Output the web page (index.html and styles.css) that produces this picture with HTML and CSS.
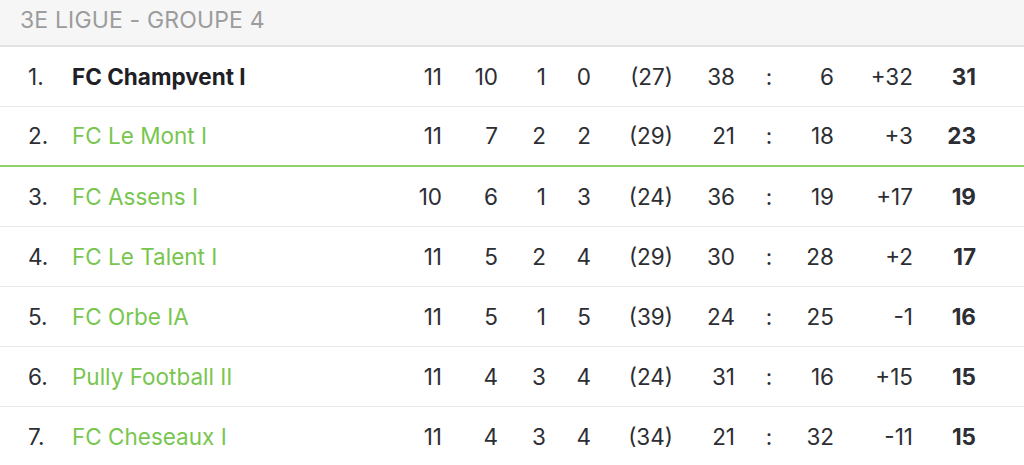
FILE: index.html
```html
<!DOCTYPE html>
<html lang="fr">
<head>
<meta charset="utf-8">
<title>3e ligue - Groupe 4</title>
<link rel="stylesheet" href="styles.css">
</head>
<body>
<div class="league">
  <div class="league-head">3E LIGUE - GROUPE 4</div>
  <div class="table">
    <div class="row">
      <span class="rank">1.</span><span class="team team-self">FC Champvent I</span>
      <span class="num">11</span><span class="num">10</span><span class="num">1</span><span class="num">0</span><span class="num">(27)</span><span class="num">38</span><span class="colon">:</span><span class="num">6</span><span class="num">+32</span><span class="num pts">31</span>
    </div>
    <div class="row row-promo">
      <span class="rank">2.</span><span class="team">FC Le Mont I</span>
      <span class="num">11</span><span class="num">7</span><span class="num">2</span><span class="num">2</span><span class="num">(29)</span><span class="num">21</span><span class="colon">:</span><span class="num">18</span><span class="num">+3</span><span class="num pts">23</span>
    </div>
    <div class="row">
      <span class="rank">3.</span><span class="team">FC Assens I</span>
      <span class="num">10</span><span class="num">6</span><span class="num">1</span><span class="num">3</span><span class="num">(24)</span><span class="num">36</span><span class="colon">:</span><span class="num">19</span><span class="num">+17</span><span class="num pts">19</span>
    </div>
    <div class="row">
      <span class="rank">4.</span><span class="team">FC Le Talent I</span>
      <span class="num">11</span><span class="num">5</span><span class="num">2</span><span class="num">4</span><span class="num">(29)</span><span class="num">30</span><span class="colon">:</span><span class="num">28</span><span class="num">+2</span><span class="num pts">17</span>
    </div>
    <div class="row">
      <span class="rank">5.</span><span class="team">FC Orbe IA</span>
      <span class="num">11</span><span class="num">5</span><span class="num">1</span><span class="num">5</span><span class="num">(39)</span><span class="num">24</span><span class="colon">:</span><span class="num">25</span><span class="num">-1</span><span class="num pts">16</span>
    </div>
    <div class="row">
      <span class="rank">6.</span><span class="team">Pully Football II</span>
      <span class="num">11</span><span class="num">4</span><span class="num">3</span><span class="num">4</span><span class="num">(24)</span><span class="num">31</span><span class="colon">:</span><span class="num">16</span><span class="num">+15</span><span class="num pts">15</span>
    </div>
    <div class="row">
      <span class="rank">7.</span><span class="team">FC Cheseaux I</span>
      <span class="num">11</span><span class="num">4</span><span class="num">3</span><span class="num">4</span><span class="num">(34)</span><span class="num">21</span><span class="colon">:</span><span class="num">32</span><span class="num">-11</span><span class="num pts">15</span>
    </div>
  </div>
</div>
</body>
</html>
```

FILE: styles.css
```css
* { box-sizing: border-box; }
html, body { margin: 0; padding: 0; background: #fff; }
body {
  font-family: Inter, "Liberation Sans", Arial, sans-serif;
  color: #2c2e33;
  overflow: hidden;
}
.league-head {
  height: 47px;
  background: #f6f6f6;
  border-bottom: 2px solid #e2e2e2;
  padding: 6px 0 0 20px;
  font-size: 23px;
  line-height: 28px;
  letter-spacing: 0.15px;
  color: #9c9c9c;
}
.row {
  display: grid;
  grid-template-columns: 44px 1fr 52px 56px 48px 45px 82px 62px 68px 31px 79px 63px;
  align-items: center;
  height: 60px;
  padding: 0 48px 0 28px;
  border-bottom: 1px solid #e6e9ee;
  font-size: 22.5px;
  line-height: 26px;
}
.row-promo { border-bottom: 2px solid #8fd36a; }
.rank { color: #2c2e33; }
.team { color: #78c650; white-space: nowrap; }
.team-self { color: #1e2026; font-weight: 700; }
.num { text-align: right; }
.colon { text-align: center; }
.pts { font-weight: 700; }
```
